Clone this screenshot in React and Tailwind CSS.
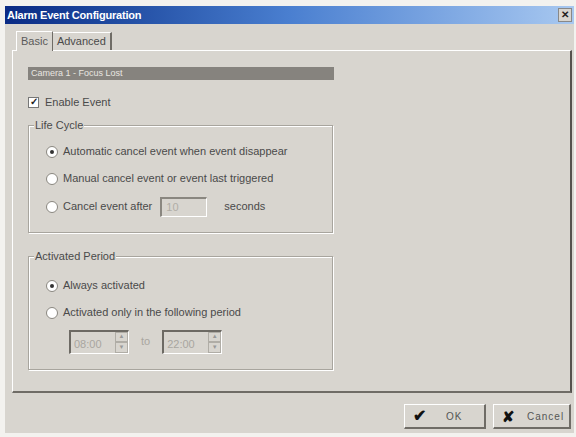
import React from 'react'

const Radio = ({ checked }) => (
    <span className="relative inline-block h-[12px] w-[12px] shrink-0 rounded-full border border-[#8a8780] bg-white">
        {checked && <span className="absolute left-[3px] top-[3px] h-[4px] w-[4px] rounded-full bg-[#333]" />}
    </span>
)

const Spinner = ({ value }) => (
    <div className="flex h-[24px] w-[60px] border-l-2 border-t-2 border-[#6d6a64] border-b border-r border-b-white border-r-white bg-[#d8d5cf]">
        <span className="flex-1 pl-[3px] pt-[4px] text-[#a9a6a0]">{value}</span>
        <div className="flex w-[13px] flex-col">
            <span className="flex h-1/2 items-center justify-center border border-[#b0ada6] text-[6px] text-[#999]">▲</span>
            <span className="flex h-1/2 items-center justify-center border border-[#b0ada6] text-[6px] text-[#999]">▼</span>
        </div>
    </div>
)

const Group = ({ title, children, className }) => (
    <div className={`relative ml-[15px] w-[305px] border border-[#a8a59e] shadow-[inset_1px_1px_0_#fff,1px_1px_0_#fff] ${className}`}>
        <span className="absolute -top-[8px] left-[5px] bg-[#d8d5cf] px-[1px] leading-[14px]">{title}</span>
        {children}
    </div>
)

export default function App() {
    return (
        <div
            className="h-[437px] w-[576px] overflow-hidden bg-[#f3f2ef] pl-[5px] pt-[6px] text-[11px] text-[#4a4a4a]"
            style={{ fontFamily: '"Liberation Sans", Arial, sans-serif' }}
        >
            <div className="flex h-[427px] w-[569px] flex-col bg-[#d8d5cf]">
                {/* title bar */}
                <div className="flex h-[18px] items-center justify-between bg-gradient-to-r from-[#0a2a84] via-[#4a7fd0] to-[#a8c8f0] pl-[2px] pr-[2px]">
                    <span className="text-[11px] font-bold tracking-[-0.2px] text-white">Alarm Event Configuration</span>
                    <span className="flex h-[14px] w-[14px] items-center justify-center border border-[#888] bg-[#d8d5cf] text-[10px] font-bold leading-none text-[#222]">✕</span>
                </div>

                {/* tabs */}
                <div className="mt-[7px] flex h-[19px] items-end pl-[11px]">
                    <div className="relative z-10 -mb-[1px] flex h-[20px] items-center border-l border-t border-r border-l-white border-t-white border-r-[#6f6c66] bg-[#d8d5cf] px-[4px] text-[#5a5a5a]">
                        Basic
                    </div>
                    <div className="flex h-[18px] items-center border-t border-r-2 border-t-white border-r-[#6f6c66] px-[4px] text-[#4a4a4a]">
                        Advanced
                    </div>
                </div>

                {/* tab panel */}
                <div className="ml-[7px] flex h-[343px] w-[560px] flex-col border-l border-t border-b-2 border-r-2 border-l-white border-t-white border-b-[#6f6c66] border-r-[#55524d]">
                    <div className="ml-[15px] mt-[16px] flex h-[13px] w-[306px] items-center bg-[#86837e] pl-[3px] text-[9px] text-[#e8e6e0]">
                        Camera 1 - Focus Lost
                    </div>

                    <div className="ml-[15px] mt-[14px] flex items-center gap-[6px]">
                        <span className="flex h-[11px] w-[11px] items-center justify-center border border-[#777] bg-white text-[10px] font-bold leading-none text-[#222]">✓</span>
                        <span>Enable Event</span>
                    </div>

                    <div className="mt-[14px]">
                        <Group title="Life Cycle" className="h-[108px]">
                            <div className="flex flex-col pl-[17px] pt-[18px]">
                                <div className="flex h-[16px] items-center gap-[5px]"><Radio checked /><span>Automatic cancel event when event disappear</span></div>
                                <div className="mt-[11px] flex h-[16px] items-center gap-[5px]"><Radio /><span>Manual cancel event or event last triggered</span></div>
                                <div className="mt-[12px] flex h-[16px] items-center gap-[5px]">
                                    <Radio /><span>Cancel event after</span>
                                    <span className="ml-[3px] flex h-[20px] w-[47px] items-center border-l-2 border-t-2 border-b border-r border-[#8a8780] border-b-white border-r-white pl-[4px] text-[#b0ada6]">10</span>
                                    <span className="ml-[12px]">seconds</span>
                                </div>
                            </div>
                        </Group>
                    </div>

                    <div className="mt-[23px]">
                        <Group title="Activated Period" className="h-[114px]">
                            <div className="flex flex-col pl-[17px] pt-[21px]">
                                <div className="flex h-[16px] items-center gap-[5px]"><Radio checked /><span>Always activated</span></div>
                                <div className="mt-[11px] flex h-[16px] items-center gap-[5px]"><Radio /><span>Activated only in the following period</span></div>
                                <div className="ml-[23px] mt-[9px] flex items-center">
                                    <Spinner value="08:00" />
                                    <span className="ml-[12px] mr-[12px] text-[#a9a6a0]">to</span>
                                    <Spinner value="22:00" />
                                </div>
                            </div>
                        </Group>
                    </div>
                </div>

                {/* buttons */}
                <div className="mt-[11px] flex justify-end gap-[7px] pr-[3px]">
                    <button className="flex h-[25px] w-[82px] items-center gap-[20px] border border-b-2 border-r-2 border-l-white border-t-white border-b-[#6f6c66] border-r-[#6f6c66] pl-[8px] text-[10px] text-[#555]">
                        <span className="text-[16px] font-bold leading-none text-[#111]">✔</span>
                        <span className="tracking-[1px]">OK</span>
                    </button>
                    <button className="flex h-[25px] w-[78px] items-center gap-[12px] border border-b-2 border-r-2 border-l-white border-t-white border-b-[#6f6c66] border-r-[#6f6c66] pl-[8px] text-[10px] text-[#555]">
                        <span className="text-[15px] font-bold leading-none text-[#111]">✘</span>
                        <span className="tracking-[1px]">Cancel</span>
                    </button>
                </div>
            </div>
        </div>
    )
}
